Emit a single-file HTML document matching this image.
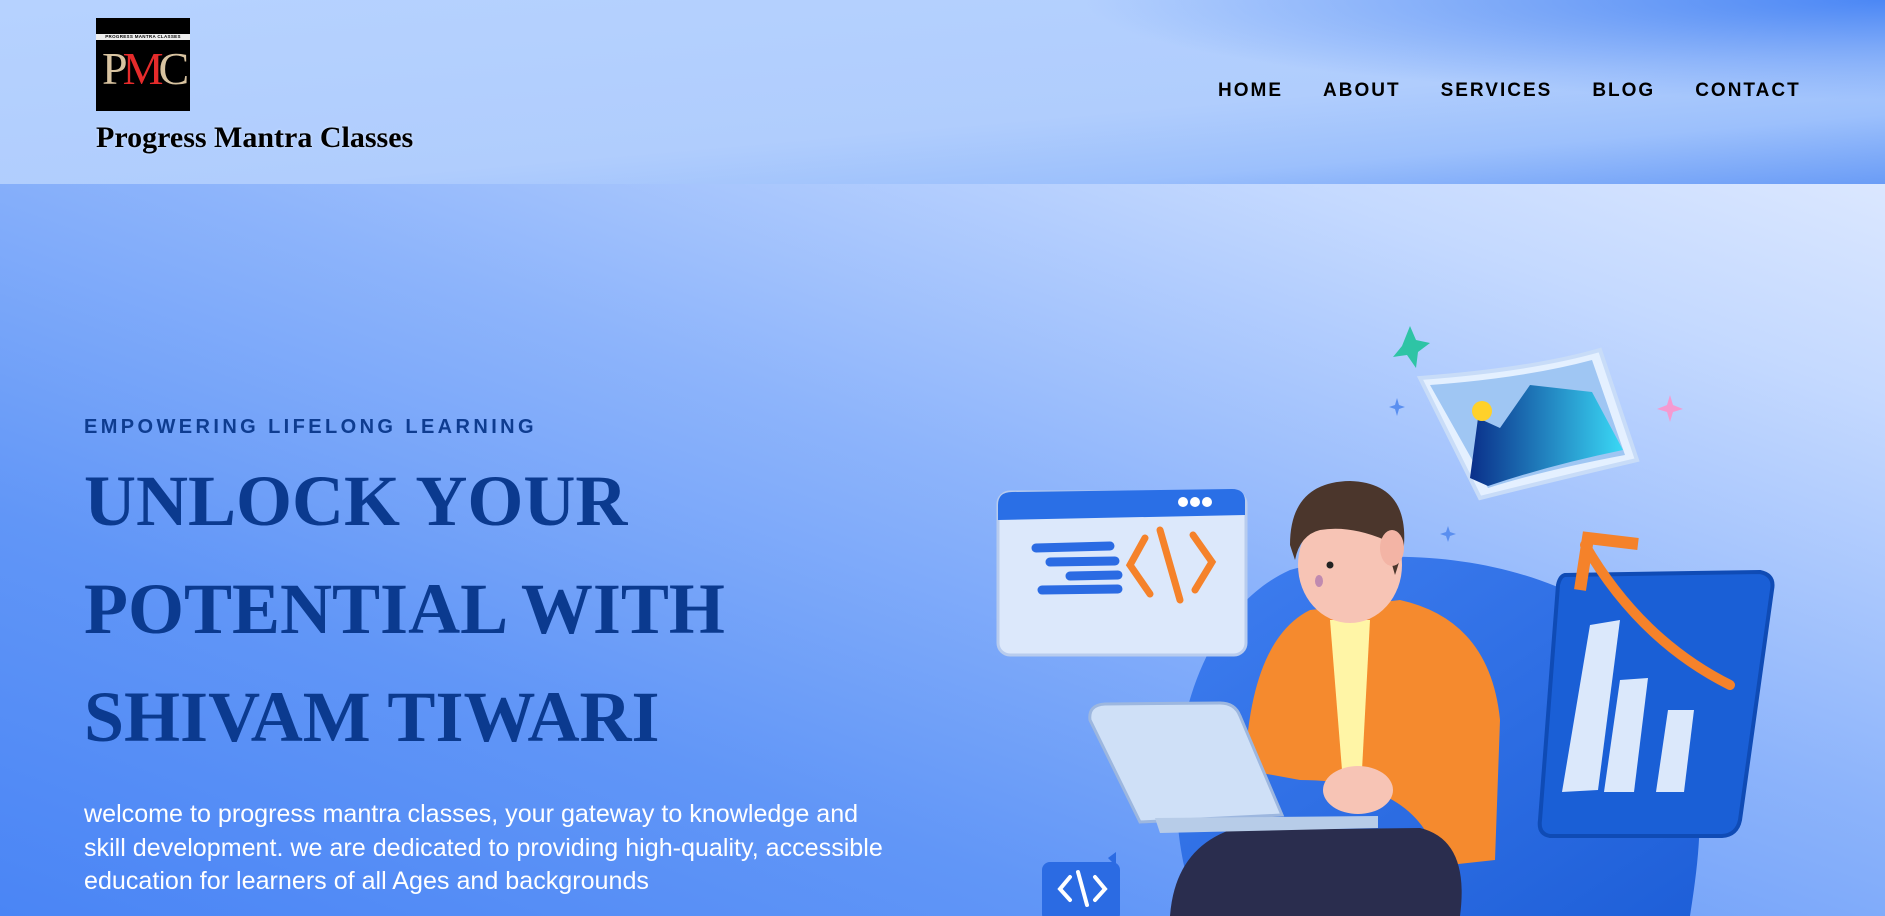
<!DOCTYPE html>
<html><head><meta charset="utf-8"><style>
*{margin:0;padding:0;box-sizing:border-box}
body{width:1885px;height:916px;overflow:hidden;position:relative;font-family:"Liberation Sans",sans-serif;
background:linear-gradient(200deg,#eef3ff 0%,#c4d9ff 25%,#8db4fb 50%,#6196f7 75%,#4a85f5 100%)}
header{position:absolute;left:0;top:0;width:1885px;height:184px;
background:linear-gradient(175deg,#b6d2ff 0%,#b0cdfd 60%,#9cc0fc 80%,#6a9cf6 100%)}
.wave{position:absolute;right:0;top:0;width:900px;height:110px;background:radial-gradient(ellipse 800px 100px at 100% 0%,#4b87f5 0%,#7aa7f8 45%,rgba(180,208,255,0) 100%)}
.logo{position:absolute;left:96px;top:18px;width:94px;height:93px;background:#000;overflow:hidden}
.logo .band{position:absolute;left:0;top:16px;width:94px;height:6px;background:#eee;font-size:4.5px;color:#000;font-weight:bold;text-align:center;line-height:6px;letter-spacing:.3px}
.logo .pmc{position:absolute;left:6px;top:24px;font-family:"Liberation Serif",serif;font-size:46px;letter-spacing:-5px;color:#d8c3a0}
.logo .pmc b{color:#e52b2b;font-weight:normal}
.brand{position:absolute;left:96px;top:121px;font-family:"Liberation Serif",serif;font-weight:bold;font-size:30px;color:#000;text-shadow:0 0 3px rgba(255,255,255,.5)}
nav{position:absolute;top:80px;left:1218px;display:flex;gap:0}
nav a{font-size:19px;font-weight:bold;color:#000;letter-spacing:2px;text-decoration:none;margin-right:40px}
.tag{position:absolute;left:84px;top:416px;font-size:20px;font-weight:bold;color:#0e3c90;letter-spacing:3.4px}
h1{position:absolute;left:84px;top:447px;font-family:"Liberation Serif",serif;font-weight:bold;font-size:72px;line-height:108px;color:#0b3a8f}
p{position:absolute;left:84px;top:798px;width:815px;font-size:25.1px;line-height:33.5px;color:#fff}
svg{position:absolute;left:0;top:0}
</style></head><body>
<header><div class="wave"></div>
<div class="logo"><div class="band">PROGRESS MANTRA CLASSES</div><div class="pmc">P<b>M</b>C</div></div>
<div class="brand">Progress Mantra Classes</div>
<nav><a>HOME</a><a>ABOUT</a><a>SERVICES</a><a>BLOG</a><a>CONTACT</a></nav>
</header>
<div class="tag">EMPOWERING LIFELONG LEARNING</div>
<h1>UNLOCK YOUR<br>POTENTIAL WITH<br>SHIVAM TIWARI</h1>
<p>welcome to progress mantra classes, your gateway to knowledge and skill development. we are dedicated to providing high-quality, accessible education for learners of all Ages and backgrounds</p>
<svg width="1885" height="916">
<defs>
<linearGradient id="ch" x1="0" y1="0" x2="1" y2="1"><stop offset="0" stop-color="#3f7ef0"/><stop offset="1" stop-color="#1e5fd8"/></linearGradient>
<linearGradient id="mt" x1="0" y1="0" x2="1" y2="0"><stop offset="0" stop-color="#0a2f8a"/><stop offset="1" stop-color="#3ad8f5"/></linearGradient>
</defs>
<path d="M1200 916 C1150 800 1180 620 1290 570 C1400 540 1560 560 1640 640 C1720 730 1700 850 1690 916 Z" fill="url(#ch)"/>
<rect x="998" y="492" width="248" height="163" rx="12" fill="#dce8fb" stroke="#b8ccee" stroke-width="3"/>
<path d="M998 505 Q998 492 1012 492 L1232 489 Q1244 489 1245 500 L1245 515 L998 520 Z" fill="#2a6fe6"/>
<circle cx="1183" cy="502" r="5" fill="#fff"/><circle cx="1195" cy="502" r="5" fill="#fff"/><circle cx="1207" cy="502" r="5" fill="#fff"/>
<g stroke="#2b6be3" stroke-width="9" stroke-linecap="round"><line x1="1036" y1="548" x2="1110" y2="546"/><line x1="1050" y1="562" x2="1115" y2="561"/><line x1="1070" y1="576" x2="1118" y2="575"/><line x1="1042" y1="590" x2="1118" y2="589"/></g>
<g stroke="#f5822a" stroke-width="7" fill="none" stroke-linecap="round"><path d="M1145 538 L1130 565 L1150 594"/><path d="M1160 530 L1180 600"/><path d="M1193 535 L1212 562 L1195 590"/></g>
<path d="M1420 378 Q1530 370 1600 350 L1637 460 Q1560 478 1480 498 Z" fill="#e4f0ff" stroke="#c8dcf8" stroke-width="4"/>
<path d="M1430 385 Q1525 378 1592 360 L1625 455 Q1545 470 1488 488 Z" fill="#9fc6f3"/>
<path d="M1470 478 L1478 418 L1500 428 L1530 385 L1592 392 L1623 450 Q1550 465 1488 486 Z" fill="url(#mt)"/>
<circle cx="1482" cy="411" r="10" fill="#ffd12a"/>
<path d="M1410 326 L1416 340 L1430 343 L1418 352 L1416 368 L1407 355 L1393 357 L1402 346 Z" fill="#2ec4a5"/>
<path d="M1670 395 L1673 405 L1683 409 L1673 412 L1670 422 L1667 412 L1657 409 L1667 405 Z" fill="#f59ad1"/>
<path d="M1397 398 L1399 405 L1405 407 L1399 409 L1397 416 L1395 409 L1389 407 L1395 405 Z" fill="#5a8ff0"/>
<path d="M1448 526 L1450 532 L1456 534 L1450 536 L1448 542 L1446 536 L1440 534 L1446 532 Z" fill="#5a8ff0"/>
<path d="M1565 575 L1760 572 Q1775 575 1772 590 L1740 820 Q1737 835 1722 836 L1550 836 Q1538 834 1540 820 L1558 585 Q1560 576 1565 575 Z" fill="#1a5fd6" stroke="#0f4bb5" stroke-width="4"/>
<g fill="#dbe8fb"><path d="M1590 625 L1620 620 L1598 790 L1562 792 Z"/><path d="M1620 680 L1648 678 L1634 792 L1604 792 Z"/><path d="M1668 710 L1694 710 L1684 792 L1656 792 Z"/></g>
<path d="M1585 545 Q1640 640 1730 685" stroke="#f5822a" stroke-width="10" fill="none" stroke-linecap="round"/>
<path d="M1580 590 L1588 538 L1638 544" stroke="#f5822a" stroke-width="12" fill="none"/>
<path d="M1245 770 Q1250 640 1310 610 L1400 600 Q1490 620 1500 720 L1495 860 L1440 866 Q1420 780 1300 780 Z" fill="#f58a2e"/>
<path d="M1330 620 L1370 620 L1362 770 L1342 770 Z" fill="#fff5a6"/>
<ellipse cx="1350" cy="565" rx="52" ry="58" fill="#f7c4b5"/>
<path d="M1290 545 Q1290 482 1350 481 Q1408 483 1404 545 Q1400 560 1395 575 L1385 540 Q1350 525 1320 530 Q1300 535 1295 560 Z" fill="#4b362c"/>
<ellipse cx="1392" cy="548" rx="12" ry="18" fill="#f3b4a5"/>
<circle cx="1330" cy="565" r="3.5" fill="#222"/>
<ellipse cx="1319" cy="581" rx="4" ry="6" fill="#c08ab0"/>
<path d="M1170 916 Q1175 850 1230 830 L1420 828 Q1470 840 1460 916 Z" fill="#2a2d4e"/>
<path d="M1090 720 Q1088 705 1105 704 L1220 703 Q1235 703 1240 716 L1282 815 L1140 822 Z" fill="#cfe0f7" stroke="#9db7df" stroke-width="3"/>
<path d="M1155 818 L1378 816 L1378 828 L1160 833 Z" fill="#b7cce8"/>
<ellipse cx="1358" cy="790" rx="35" ry="24" fill="#f7c4b5"/>
<rect x="1042" y="862" width="78" height="60" rx="8" fill="#2b6be3"/>
<path d="M1108 858 L1116 852 L1116 866 Z" fill="#2b6be3"/>
<g stroke="#fff" stroke-width="4" fill="none" stroke-linecap="round"><path d="M1070 877 L1060 889 L1070 900"/><path d="M1078 872 L1087 905"/><path d="M1095 877 L1105 889 L1095 900"/></g>
</svg>
</body></html>
